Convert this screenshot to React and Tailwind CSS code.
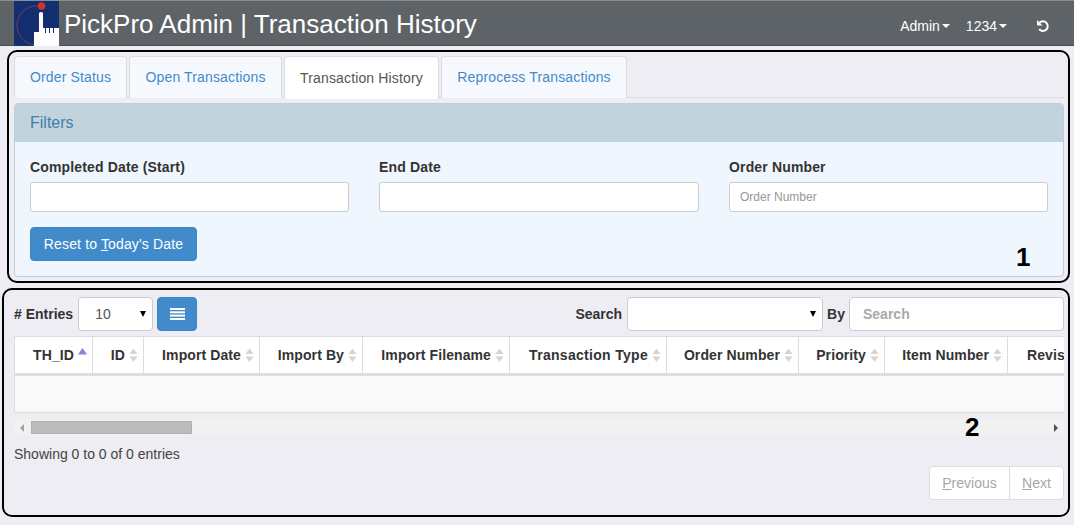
function Sort({ active }) {
  return (
    <svg width="9" height="15" viewBox="0 0 9 15" className="shrink-0 ml-1">
      {active
        ? <polygon points="4.5,0 9,6.5 0,6.5" fill="#8585dd" />
        : <polygon points="4.5,0.5 8.5,6 0.5,6" fill="#d4d4d4" />}
      {!active && <polygon points="4.5,14 8.5,8.5 0.5,8.5" fill="#d4d4d4" />}
    </svg>
  );
}

function Th({ w, label, active, wide }) {
  return (
    <div style={{ width: w }} className="shrink-0 h-full flex items-center justify-end pr-[5px] border-r border-[#dddddd]">
      <span className={`whitespace-nowrap ${wide ? "tracking-[0.3px]" : ""}`}>{label}</span>
      <Sort active={active} />
    </div>
  );
}

function Caret() {
  return <span className="inline-block ml-[2px] w-0 h-0 border-x-[4px] border-x-transparent border-t-[4px] border-t-white" />;
}

function Tab({ label, active, w }) {
  return (
    <div
      style={{ width: w }}
      className={`shrink-0 rounded-t-[4px] border border-b-0 flex items-center justify-center tracking-[0.15px] ${
        active
          ? "bg-white border-[#dddddd] text-[#555555] h-[43px] relative z-10"
          : "bg-[#f5f9fe] border-[#dddddd] text-[#428bca] h-[42px]"
      }`}
    >
      {label}
    </div>
  );
}

function Field({ label, placeholder, w }) {
  return (
    <div style={{ width: w }} className="shrink-0">
      <div className="font-bold text-[#333333] h-[20px] leading-[20px] tracking-[0.15px]">{label}</div>
      <div className="mt-[5px] h-[30px] bg-white border border-[#cccccc] rounded-[3px] px-[10px] flex items-center text-[12px] text-[#999999]">
        {placeholder}
      </div>
    </div>
  );
}

export default function App() {
  return (
    <div className="relative w-[1074px] h-[525px] overflow-hidden bg-[#eeedf3] text-[14px] text-[#333333] font-['Liberation_Sans',Arial,sans-serif]">
      {/* Header */}
      <div className="h-[46px] bg-[#5e6367] border-t border-[#8a8d90] border-b-[#4d4f58] border-b flex items-center">
        <svg width="45" height="45" viewBox="0 0 45 45" className="ml-[14px] shrink-0 self-start">
          <rect width="45" height="45" fill="#142f6f" />
          <path d="M 27.5 5.5 A 19.6 19.6 0 1 0 21 44" fill="none" stroke="#7b3a5c" strokeWidth="1" />
          <circle cx="27.5" cy="5" r="3.8" fill="#d1322b" />
          <path d="M 25 12 Q 27 10 29 12 L 29 27 L 31 27 L 31 32 L 32 32 L 32 27 L 35 27 L 35 32 L 36 32 L 36 27 L 39 27 L 39 32 L 40 32 L 40 27 L 45 27 L 45 45 L 20 45 L 20 31 L 25 31 Z" fill="#ffffff" />
        </svg>
        <div className="ml-[5px] pt-[1px] text-[26px] leading-[46px] text-white whitespace-nowrap">PickPro Admin | Transaction History</div>
        <div className="ml-auto pt-[6px] flex items-center text-white text-[14px]">
          <span>Admin</span>
          <Caret />
          <span className="ml-[16px]">1234</span>
          <Caret />
          <svg width="14" height="14" viewBox="0 0 14 14" className="ml-[29px] mr-[24px]" fill="none" stroke="#ffffff" strokeWidth="2">
            <path d="M 3.5 3.8 A 4.8 4.8 0 1 1 3.2 10.2" />
            <polygon points="1,1 1,6.5 6.5,6.5" fill="#ffffff" stroke="none" />
          </svg>
        </div>
      </div>

      {/* Section 1 */}
      <div className="pl-[14px] pr-[10px] pt-[10px]">
        <div className="flex gap-[2px] h-[42px] border-b border-[#dddddd] w-[1050px]">
          <Tab label="Order Status" w={113} />
          <Tab label="Open Transactions" w={153} />
          <Tab label="Transaction History" active w={155} />
          <Tab label="Reprocess Transactions" w={186} />
        </div>

        <div className="mt-[5px] w-[1050px] h-[174px] rounded-[4px] border border-[#bcd0db] bg-[#eff6fe] overflow-hidden">
          <div className="h-[38px] bg-[#c1d3dd] px-[15px] flex items-center text-[16px] text-[#4380a5]">Filters</div>
          <div className="px-[15px] pt-[15px]">
            <div className="flex gap-[30px]">
              <Field label="Completed Date (Start)" w={319} />
              <Field label="End Date" w={320} />
              <Field label="Order Number" placeholder="Order Number" w={319} />
            </div>
            <div className="mt-[15px] w-[167px] h-[34px] rounded-[4px] bg-[#428bca] border border-[#3d85c6] text-white flex items-center justify-center whitespace-nowrap tracking-[0.15px]">
              <span>Reset to <u>T</u>oday's Date</span>
            </div>
          </div>
        </div>
      </div>

      {/* Section 2 */}
      <div className="pl-[14px] mt-[20px]">
        <div className="h-[34px] flex items-center w-[1050px]">
          <span className="font-bold">
            # Entries
          </span>
          <div className="ml-[5px] w-[75px] h-[34px] bg-white border border-[#cccccc] rounded-[4px] flex items-center pl-[16px] pr-[6px] text-[#555555]">
            10
            <span className="ml-auto w-0 h-0 border-x-[3px] border-x-transparent border-t-[6px] border-t-black" />
          </div>
          <div className="ml-[4px] w-[40px] h-[34px] rounded-[4px] bg-[#428bca] border border-[#3d85c6] flex items-center justify-center">
            <svg width="15" height="12" viewBox="0 0 15 12" fill="#ffffff">
              <rect x="0" y="0" width="15" height="2" />
              <rect x="0" y="3.3" width="15" height="2" />
              <rect x="0" y="6.6" width="15" height="2" />
              <rect x="0" y="10" width="15" height="2" />
            </svg>
          </div>
          <span className="ml-auto font-bold">Search</span>
          <div className="ml-[5px] w-[196px] h-[34px] bg-white border border-[#cccccc] rounded-[4px] flex items-center justify-end pr-[6px]">
            <span className="w-0 h-0 border-x-[3px] border-x-transparent border-t-[6px] border-t-black" />
          </div>
          <span className="ml-[4px] font-bold">By</span>
          <div className="ml-[4px] w-[215px] h-[34px] bg-white border border-[#cccccc] rounded-[4px] flex items-center pl-[13px] font-bold text-[#a9a9a9]">
            Search
          </div>
        </div>

        <div className="mt-[5px] w-[1050px] overflow-hidden border-l border-[#dddddd]">
          <div className="h-[37px] bg-white border-t border-[#dddddd] flex items-center font-bold text-[14px] tracking-[0.1px]">
            <Th w={78} label="TH_ID" active />
            <Th w={51} label="ID" />
            <Th w={116} label="Import Date" />
            <Th w={103} label="Import By" />
            <Th w={147} label="Import Filename" />
            <Th w={157} label="Transaction Type" wide />
            <Th w={132} label="Order Number" />
            <Th w={86} label="Priority" />
            <Th w={123} label="Item Number" />
            <div className="shrink-0 pl-[19px] whitespace-nowrap">Revision</div>
          </div>
          <div className="h-[3px] bg-[#dddddd]" />
          <div className="h-[37px] bg-[#f9f9f9] border-b border-[#dddddd]" />
        </div>

        <div className="mt-[6px] w-[1050px] h-[17px] bg-[#f1f1f1] flex items-center relative">
          <span className="ml-[6px] w-0 h-0 border-y-[4px] border-y-transparent border-r-[4px] border-r-[#a3a3a3]" />
          <div className="ml-[7px] w-[161px] h-[13px] bg-[#bcbcbc] border border-[#b0b0b0]" />
          <span className="ml-auto mr-[6px] w-0 h-0 border-y-[4px] border-y-transparent border-l-[4px] border-l-[#505050]" />
        </div>

        <div className="mt-[8px] h-[20px] leading-[20px] text-[#444444]">Showing 0 to 0 of 0 entries</div>

        <div className="mt-[2px] w-[1050px] flex justify-end">
          <div className="flex h-[34px] bg-white border border-[#dddddd] rounded-[4px] text-[#a8a8a8]">
            <div className="w-[80px] flex items-center justify-center border-r border-[#dddddd]"><span><u>P</u>revious</span></div>
            <div className="w-[53px] flex items-center justify-center"><span><u>N</u>ext</span></div>
          </div>
        </div>
      </div>

      {/* Annotation overlays */}
      <div className="absolute left-[7px] top-[50px] w-[1063px] h-[233px] border-2 border-black rounded-[10px] pointer-events-none" />
      <div className="absolute left-[2px] top-[288px] w-[1068px] h-[229px] border-2 border-black rounded-[10px] pointer-events-none" />
      <div className="absolute left-[1016px] top-[241px] text-[26px] leading-[32px] font-bold text-black">1</div>
      <div className="absolute left-[965px] top-[411px] text-[26px] leading-[32px] font-bold text-black">2</div>
    </div>
  );
}
